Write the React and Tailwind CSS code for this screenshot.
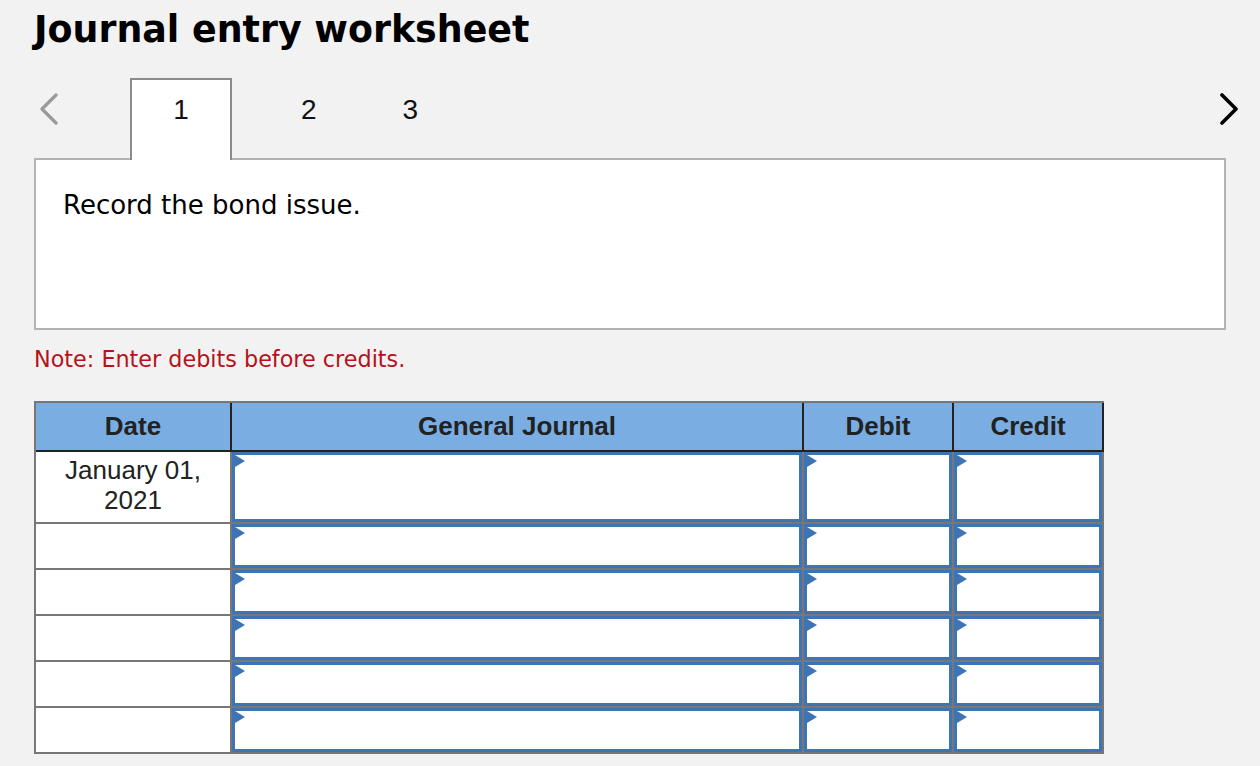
import React from 'react';

const rows = [
  { date: ['January 01,', '2021'] },
  { date: null },
  { date: null },
  { date: null },
  { date: null },
  { date: null },
];

const Marker = () => (
  <svg className="absolute left-0 top-0" width="10" height="12" viewBox="0 0 10 12">
    <polygon points="0,0 10,6 0,12" fill="#3d74b6" />
  </svg>
);

const InputCell = () => (
  <div className="relative bg-white border-[3px] border-[#3d74b6]">
    <Marker />
  </div>
);

const App = () => {
  return (
    <div className="min-h-[766px] bg-[#f2f2f2] pl-[34px] pt-[8px] text-black">
      <h1 className="font-['DejaVu_Sans',sans-serif] text-[36.4px] font-bold leading-[44px]">
        Journal entry worksheet
      </h1>

      <div className="mt-[26px] flex h-[80px] items-start pr-[21px] font-['Liberation_Sans',Arial,sans-serif] text-[28px] text-[#111]">
        <svg className="ml-[5px] mt-[15px]" width="20" height="32" viewBox="0 0 20 32">
          <polyline points="17,2 3,16 17,30" fill="none" stroke="#9a9a9a" strokeWidth="3.2" strokeLinecap="round" strokeLinejoin="round" />
        </svg>
        <div className="relative z-10 ml-[71px] h-[82px] w-[102px] border-2 border-b-0 border-[#8a8a8a] bg-white pt-[15px] text-center leading-[30px]">
          1
        </div>
        <span className="ml-[69px] mt-[17px] leading-[30px]">2</span>
        <span className="ml-[86px] mt-[17px] leading-[30px]">3</span>
        <svg className="ml-auto mt-[15px]" width="20" height="32" viewBox="0 0 20 32">
          <polyline points="3,2 17,16 3,30" fill="none" stroke="#000" strokeWidth="3.6" strokeLinecap="round" strokeLinejoin="round" />
        </svg>
      </div>

      <div className="h-[172px] w-[1192px] border-2 border-[#b3b3b3] bg-white pl-[27px] pt-[30px] font-['DejaVu_Sans',sans-serif] text-[26px] leading-[30px]">
        Record the bond issue.
      </div>

      <p className="mt-[16px] font-['DejaVu_Sans',sans-serif] text-[22.3px] leading-[26px] text-[#b5121b]">
        Note: Enter debits before credits.
      </p>

      <div className="mt-[29px] w-[1070px] font-['Liberation_Sans',Arial,sans-serif] text-[26px] text-[#222]">
        <div className="grid grid-cols-[194px_570px_148px_148px] gap-[2px] border-l-2 border-t-2 border-[#777] bg-[#222] pb-[2px] pr-[2px]">
          {['Date', 'General Journal', 'Debit', 'Credit'].map((h) => (
            <div key={h} className="flex h-[47px] items-center justify-center bg-[#7aaee2] font-bold">
              {h}
            </div>
          ))}
        </div>
        <div className="grid grid-cols-[194px_570px_148px_148px] grid-rows-[70px_repeat(5,44px)] gap-[2px] bg-[#777] px-[2px] pb-[2px]">
          {rows.map((r, i) => (
            <React.Fragment key={i}>
              <div className="bg-white pt-[3px] text-center leading-[30px]">
                {r.date && (
                  <>
                    {r.date[0]}
                    <br />
                    {r.date[1]}
                  </>
                )}
              </div>
              <InputCell />
              <InputCell />
              <InputCell />
            </React.Fragment>
          ))}
        </div>
      </div>
    </div>
  );
};

export default App;
